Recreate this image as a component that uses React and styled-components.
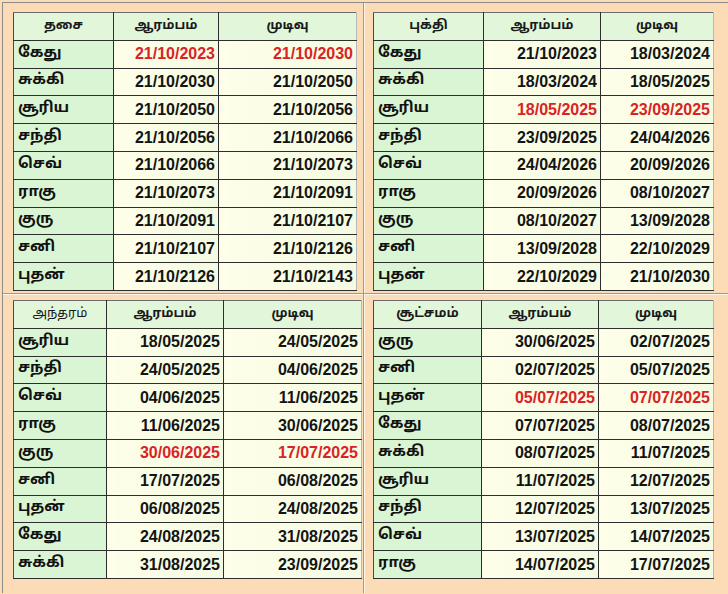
import React from "react";
import styled, { createGlobalStyle } from "styled-components";

const TAMIL = `"Noto Sans Tamil", "Noto Sans Tamil UI", "Lohit Tamil", "Noto Serif Tamil", "Liberation Sans", sans-serif`;

const Global = createGlobalStyle`
  html, body { margin: 0; padding: 0; background: #fcdcb7; }
  body { font-family: "Liberation Sans", Arial, sans-serif; overflow: hidden; }
`;

const Frame = styled.div`
  margin: 2px 0 0 2px;
  border-top: 1px solid #8c8c8c;
  border-left: 1px solid #8c8c8c;
  display: grid;
  grid-template-columns: 360px 366px;
  grid-template-rows: 290px 300px;
`;

const Cell = styled.div`
  box-sizing: border-box;
  padding: ${p => (p.$bottom ? "6px" : "9px")} 0 0 ${p => (p.$right ? "9px" : "10px")};
  ${p => p.$right && `border-left: 1px solid #9a9a9a; box-shadow: inset 1px 0 0 #fff6ea;`}
  ${p => p.$bottom && `border-top: 1px solid #9a9a9a; box-shadow: inset 0 1px 0 #fff6ea${p.$right ? ", inset 1px 0 0 #fff6ea" : ""};`}
`;

const Table = styled.table`
  border-collapse: collapse;
  table-layout: fixed;
  width: ${p => p.$w}px;
  border-left: 1px solid #4a4a4a;
  border-top: 1px solid #6a6a6a;
  border-right: 1px solid #b8b8b8;
  border-bottom: 1px solid #e2e2e2;
  col:nth-child(1) { width: ${p => p.$c1}px; }
  col:nth-child(2) { width: ${p => p.$c2}px; }
  tr { height: 27.8px; }
`;

const Head = styled.th`
  background: #e2f7da;
  border: 1px solid #2e2e2e;
  border-top-color: #6a6a6a;
  color: #1a1a1a;
  font-family: ${TAMIL};
  font-size: 13px;
  font-weight: ${p => (p.$light ? 400 : 700)};
  text-align: center;
  padding: 0 0 1px;
  line-height: 18px;
  &:first-child { border-left-color: #4a4a4a; }
  &:last-child { border-right-color: #b8b8b8; }
`;

const Name = styled.td`
  background: #daf5d3;
  border: 1px solid #2e2e2e;
  border-left-color: #4a4a4a;
  color: #111;
  font-family: ${TAMIL};
  font-size: 15px;
  font-weight: 700;
  line-height: 20px;
  padding: 0 0 1px 4px;
  text-align: left;
  white-space: nowrap;
`;

const DateCell = styled.td`
  background: linear-gradient(to right, #fefee9, #f4fbe2);
  border: 1px solid #2e2e2e;
  color: ${p => (p.$hot ? "#d82424" : "#141414")};
  font-family: "Liberation Sans", Arial, sans-serif;
  font-size: 16px;
  font-weight: 700;
  line-height: 20px;
  text-align: right;
  padding: 0 3px 0 0;
  white-space: nowrap;
  &:last-child { border-right-color: #b8b8b8; }
`;

const HEAD2 = "ஆரம்பம்";
const HEAD3 = "முடிவு";

const tables = [
  {
    title: "தசை", w: 344, c1: 100, c2: 105, hot: 0,
    rows: [
      ["கேது", "21/10/2023", "21/10/2030"],
      ["சுக்கி", "21/10/2030", "21/10/2050"],
      ["சூரிய", "21/10/2050", "21/10/2056"],
      ["சந்தி", "21/10/2056", "21/10/2066"],
      ["செவ்", "21/10/2066", "21/10/2073"],
      ["ராகு", "21/10/2073", "21/10/2091"],
      ["குரு", "21/10/2091", "21/10/2107"],
      ["சனி", "21/10/2107", "21/10/2126"],
      ["புதன்", "21/10/2126", "21/10/2143"],
    ],
  },
  {
    title: "புக்தி", w: 341, c1: 110, c2: 117, hot: 2, right: true,
    rows: [
      ["கேது", "21/10/2023", "18/03/2024"],
      ["சுக்கி", "18/03/2024", "18/05/2025"],
      ["சூரிய", "18/05/2025", "23/09/2025"],
      ["சந்தி", "23/09/2025", "24/04/2026"],
      ["செவ்", "24/04/2026", "20/09/2026"],
      ["ராகு", "20/09/2026", "08/10/2027"],
      ["குரு", "08/10/2027", "13/09/2028"],
      ["சனி", "13/09/2028", "22/10/2029"],
      ["புதன்", "22/10/2029", "21/10/2030"],
    ],
  },
  {
    title: "அந்தரம்", light: true, w: 349, c1: 93, c2: 117, hot: 4, bottom: true,
    rows: [
      ["சூரிய", "18/05/2025", "24/05/2025"],
      ["சந்தி", "24/05/2025", "04/06/2025"],
      ["செவ்", "04/06/2025", "11/06/2025"],
      ["ராகு", "11/06/2025", "30/06/2025"],
      ["குரு", "30/06/2025", "17/07/2025"],
      ["சனி", "17/07/2025", "06/08/2025"],
      ["புதன்", "06/08/2025", "24/08/2025"],
      ["கேது", "24/08/2025", "31/08/2025"],
      ["சுக்கி", "31/08/2025", "23/09/2025"],
    ],
  },
  {
    title: "சூட்சமம்", w: 341, c1: 108, c2: 117, hot: 2, right: true, bottom: true,
    rows: [
      ["குரு", "30/06/2025", "02/07/2025"],
      ["சனி", "02/07/2025", "05/07/2025"],
      ["புதன்", "05/07/2025", "07/07/2025"],
      ["கேது", "07/07/2025", "08/07/2025"],
      ["சுக்கி", "08/07/2025", "11/07/2025"],
      ["சூரிய", "11/07/2025", "12/07/2025"],
      ["சந்தி", "12/07/2025", "13/07/2025"],
      ["செவ்", "13/07/2025", "14/07/2025"],
      ["ராகு", "14/07/2025", "17/07/2025"],
    ],
  },
];

function Period({ t }) {
  return (
    <Cell $right={t.right} $bottom={t.bottom}>
      <Table $w={t.w} $c1={t.c1} $c2={t.c2}>
        <colgroup>
          <col />
          <col />
          <col />
        </colgroup>
        <thead>
          <tr>
            <Head $light={t.light}>{t.title}</Head>
            <Head>{HEAD2}</Head>
            <Head>{HEAD3}</Head>
          </tr>
        </thead>
        <tbody>
          {t.rows.map((r, i) => (
            <tr key={i}>
              <Name>{r[0]}</Name>
              <DateCell $hot={i === t.hot}>{r[1]}</DateCell>
              <DateCell $hot={i === t.hot}>{r[2]}</DateCell>
            </tr>
          ))}
        </tbody>
      </Table>
    </Cell>
  );
}

export default function App() {
  return (
    <>
      <Global />
      <Frame>
        {tables.map((t, i) => (
          <Period key={i} t={t} />
        ))}
      </Frame>
    </>
  );
}
